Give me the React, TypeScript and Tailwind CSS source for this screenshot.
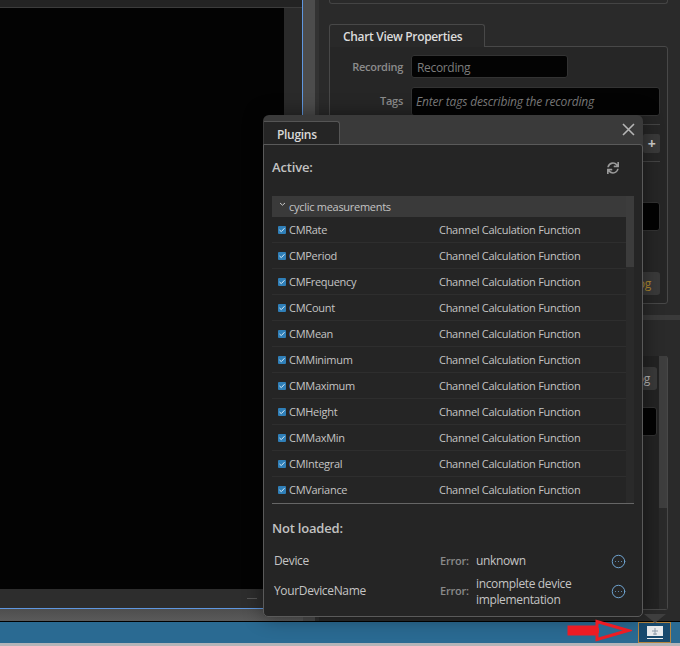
import { CircleEllipsis } from "lucide-react";
import { FaSync } from "react-icons/fa";

const names = ["CMRate", "CMPeriod", "CMFrequency", "CMCount", "CMMean", "CMMinimum", "CMMaximum", "CMHeight", "CMMaxMin", "CMIntegral", "CMVariance"];

function Row({ name }: { name: string }) {
  return (
    <div className="flex h-[26px] items-center border-b border-[#2e2e2e] text-[#c4c4c4] last:border-transparent">
      <span className="ml-[6px] mr-[3px] flex h-[8px] w-[8px] items-center justify-center rounded-[1px] bg-[#2f7fb8]">
        <svg width="8" height="8" viewBox="0 0 8 8"><path d="M1.5 4 L3.3 5.6 L6.5 2.2" fill="none" stroke="#dcecf7" strokeWidth="1" /></svg>
      </span>
      <span className="w-[150px] pt-[2px]">{name}</span>
      <span className="pt-[2px]">Channel Calculation Function</span>
    </div>
  );
}

function Plugins() {
  return (
    <div className="absolute left-[263px] top-[115px] flex h-[502px] w-[380px] flex-col rounded-[6px] bg-[#3a3a3a] shadow-[0_0_20px_rgba(0,0,0,0.45)]">
      <div className="flex h-[29px] shrink-0 items-end justify-between">
        <div className="ml-[1px] flex h-[23px] w-[76px] items-center rounded-tr-[3px] border-r border-t border-[#555] bg-[#252525] pl-[13px] pt-[3px] text-[12px] font-semibold tracking-[-0.3px] text-[#d8d8d8]">Plugins</div>
        <svg className="mb-[8px] mr-[8px]" width="13" height="13" viewBox="0 0 13 13"><path d="M1 1 L12 12 M12 1 L1 12" stroke="#b5b5b5" strokeWidth="1.6" /></svg>
      </div>
      <div className="flex min-h-0 flex-1 flex-col rounded-b-[5px] rounded-tr-[3px] border border-t border-[#5a5a5a] bg-[#252525] px-[8px]">
        <div className="flex h-[51px] shrink-0 items-center justify-between pb-[6px] pr-[15px]">
          <span className="text-[13px] font-semibold tracking-[-0.15px] text-[#c2c2c2]">Active:</span>
          <FaSync className="text-[#9a9a9a]" size={12} />
        </div>
        <div className="flex h-[307px] shrink-0">
          <div className="flex-1">
            <div className="flex h-[21px] items-center bg-[#3a3a3a] text-[#c4c4c4]">
              <svg className="ml-[7px] mr-[3px] -translate-y-[2px]" width="7" height="5" viewBox="0 0 7 5"><path d="M1 1 L3.5 3.2 L6 1" fill="none" stroke="#c8c8c8" strokeWidth="1" /></svg>
              <span className="pt-[1px]">cyclic measurements</span>
            </div>
            {names.map((n) => <Row key={n} name={n} />)}
          </div>
          <div className="w-[8px] bg-[#2a2a2a]"><div className="h-[71px] bg-[#3c3c3c]" /></div>
        </div>
        <div className="h-px shrink-0 bg-[#666]" />
        <div className="mt-[15px] text-[13px] font-semibold leading-[18px] tracking-[-0.2px] text-[#c2c2c2]">Not loaded:</div>
        <div className="mt-[14px] flex h-[20px] items-center text-[12px] tracking-[-0.35px] text-[#c4c4c4]">
          <span className="w-[168px] pl-[2px]">Device</span>
          <span className="w-[36px] text-[11px] font-semibold tracking-[-0.2px] text-[#8a8a8a]">Error:</span>
          <span className="w-[135px]">unknown</span>
          <CircleEllipsis size={15} strokeWidth={1.6} className="text-[#6fa3cf]" />
        </div>
        <div className="mt-[2px] flex h-[36px] items-center text-[12px] tracking-[-0.35px] text-[#c4c4c4]">
          <span className="w-[168px] pl-[2px]">YourDeviceName</span>
          <span className="w-[36px] text-[11px] font-semibold tracking-[-0.2px] text-[#8a8a8a]">Error:</span>
          <span className="w-[135px] pt-[2px] leading-[16px]">incomplete device implementation</span>
          <CircleEllipsis size={15} strokeWidth={1.6} className="text-[#6fa3cf]" />
        </div>
      </div>
    </div>
  );
}

function RightPanels() {
  return (
    <div className="flex min-w-0 flex-1 flex-col bg-[#2a2a2a]">
      <div className="ml-[10px] mr-[12px] h-[4px] shrink-0 rounded-b-[3px] border-x border-b border-[#444]" />
      <div className="ml-[10px] mr-[12px] mt-[20px] flex h-[280px] shrink-0 flex-col">
        <div className="relative z-10 -mb-px flex h-[23px] w-[156px] items-center rounded-t-[3px] border-x border-t border-[#484848] bg-[#292929] pl-[13px] pt-[2px] text-[12px] font-semibold tracking-[-0.33px] text-[#dcdcdc]">Chart View Properties</div>
        <div className="flex-1 rounded-b-[3px] rounded-tr-[3px] border border-[#484848] bg-[#262626] pr-[7px]">
          <div className="mt-[8px] flex h-[23px] items-center">
            <span className="w-[73px] pt-[2px] text-right font-semibold text-[#8c8c8c]">Recording</span>
            <div className="ml-[8px] flex h-[23px] w-[157px] items-center rounded-[3px] border border-[#333] bg-[#030303] pl-[5px] pt-[2px] text-[12px] tracking-[-0.33px] text-[#7c7c7c]">Recording</div>
          </div>
          <div className="mt-[9px] flex h-[29px] items-center">
            <span className="w-[73px] text-right font-semibold text-[#8c8c8c]">Tags</span>
            <div className="ml-[8px] flex h-[29px] flex-1 items-center rounded-[3px] border border-[#333] bg-[#030303] pl-[4px] text-[12px] italic tracking-[-0.18px] text-[#7c7c7c]">Enter tags describing the recording</div>
          </div>
          <div className="mt-[8px] h-px bg-[#444]" />
          <div className="mt-[9px] flex justify-end">
            <div className="flex h-[19px] w-[17px] items-center justify-center rounded-[2px] bg-[#3a3a3a] text-[14px] font-bold leading-none text-[#cfcfcf]">+</div>
          </div>
          <div className="mt-[8px] h-px bg-[#444]" />
          <div className="ml-auto mt-[40px] h-[29px] w-[200px] rounded-[3px] border border-[#333] bg-[#030303]" />
          <div className="ml-auto mt-[41px] flex h-[23px] w-[60px] items-center justify-end rounded-[3px] bg-[#3a3a3a] pr-[9px] text-[12px] text-[#b08a30]">Log</div>
        </div>
      </div>
      <div className="ml-[16px] mt-[11px] h-[5px] shrink-0 bg-[#3a3a3a]" />
      <div className="ml-[10px] mr-[12px] mt-[36px] flex h-[254px] shrink-0 rounded-t-[3px] rounded-b-[3px] border-x border-b border-[#484848] bg-[#232323]">
        <div className="flex-1 pr-[2px]">
          <div className="ml-auto mt-[11px] flex h-[23px] w-[60px] items-center justify-end rounded-[3px] bg-[#3a3a3a] pr-[7px] text-[12px] text-[#b8b8b8]">Log</div>
          <div className="ml-auto mt-[17px] h-[29px] w-[200px] rounded-[3px] border border-[#333] bg-[#030303]" />
        </div>
        <div className="w-[8px] bg-[#2a2a2a]"><div className="h-[152px] bg-[#3e3e3e]" /></div>
      </div>
    </div>
  );
}

export default function App() {
  return (
    <div className="relative flex h-[646px] w-[680px] flex-col overflow-hidden bg-[#2a2a2a] text-[11px] tracking-[-0.28px]" style={{ fontFamily: '"Open Sans", sans-serif' }}>
      <div className="flex min-h-0 flex-1">
        <div className="flex w-[303px] shrink-0 flex-col">
          <div className="flex min-h-0 flex-1 flex-col border-b border-r border-[#5f97e0]">
            <div className="h-[8px] shrink-0 border-b border-[#3c3c3c] bg-[#232323]" />
            <div className="flex min-h-0 flex-1">
              <div className="w-[284px] bg-[#030303]" />
              <div className="flex-1 bg-[#2a2a2a]" />
            </div>
            <div className="flex h-[19px] shrink-0 items-center justify-end bg-[#2d2d2d] pr-[45px]">
              <div className="h-px w-[10px] bg-[#555]" />
            </div>
          </div>
          <div className="h-[12px] shrink-0 bg-gradient-to-b from-[#4e4e4e] to-[#5a5a5a]" />
        </div>
        <div className="w-[12px] shrink-0 bg-[#4c4c4c]" />
        <div className="w-[4px] shrink-0 bg-[#323232]" />
        <RightPanels />
      </div>
      <div className="flex h-[25px] shrink-0 flex-col">
        <div className="flex h-[22px] justify-end border-t border-black bg-[#2a6a92] pr-[9px]">
          <div className="flex w-[33px] flex-col items-center justify-center border border-[#b5853f] bg-[#184a6e]">
            <svg width="16" height="13" viewBox="0 0 16 13">
              <rect x="0" y="0" width="16" height="10" fill="#e8ebee" />
              <path d="M8 2 V9 M5 5 H11 M6 8 H10" stroke="#8a99a8" strokeWidth="1" />
              <rect x="0" y="12" width="16" height="1" fill="#f0f0f0" />
            </svg>
          </div>
        </div>
        <div className="flex-1 bg-[#b4b4b8]" />
      </div>
      <Plugins />
      <svg className="absolute left-[643px] top-[614px]" width="24" height="9" viewBox="0 0 24 9"><path d="M1 0 H23 L12 9 Z" fill="#3e3e3e" /></svg>
      <svg className="absolute left-[566px] top-[619px]" width="66" height="23" viewBox="0 0 66 23">
        <path d="M3 8 H31 V2.5 L62 11.5 L31 20.5 V15 H3 Z" fill="#2a6a92" stroke="#ed1c24" strokeWidth="3" />
        <path d="M3 9 H33 V14 H3 Z" fill="#ed1c24" />
      </svg>
    </div>
  );
}
